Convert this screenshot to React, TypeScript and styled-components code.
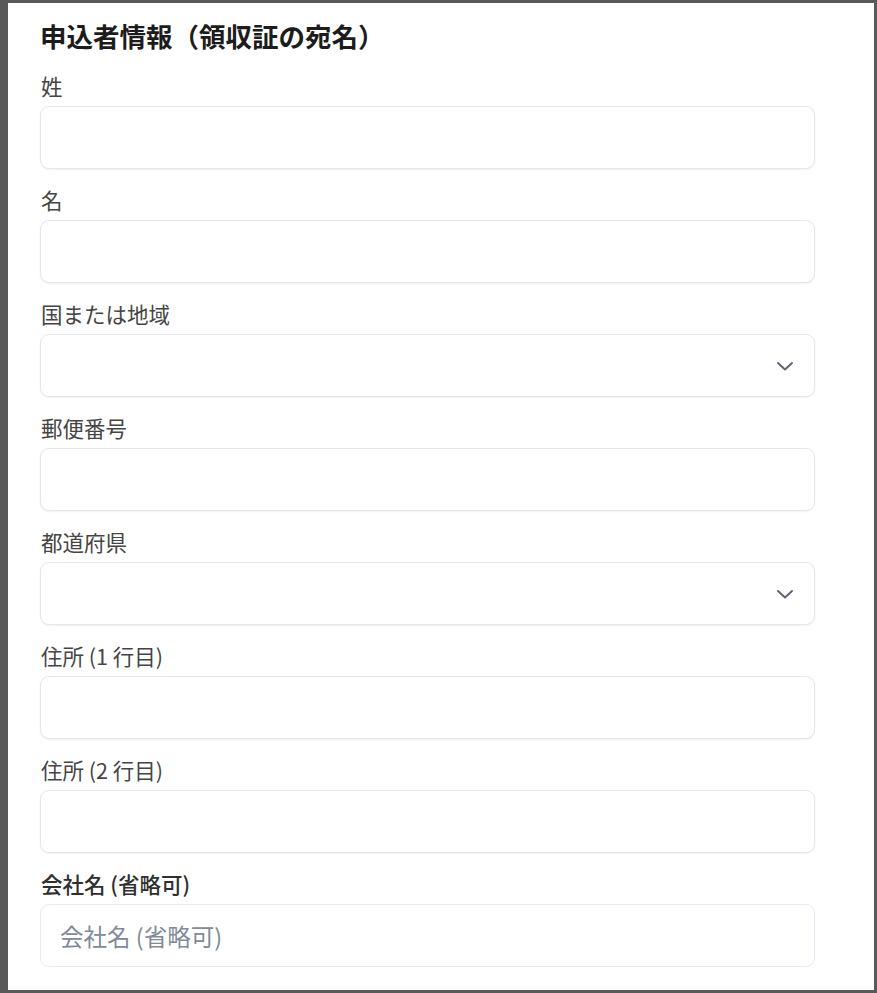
import styled, { createGlobalStyle } from "styled-components";

const GlobalStyle = createGlobalStyle`
    html, body {
        margin: 0;
        padding: 0;
        background: #ffffff;
    }

    * {
        box-sizing: border-box;
    }
`;

const Frame = styled.div`
    width: 877px;
    height: 993px;
    border-style: solid;
    border-color: #595959;
    border-width: 3px 3px 3px 8px;
    background: #ffffff;
    padding: 15px 59px 23px 32px;
    font-family: "Noto Sans CJK JP", "Noto Sans", sans-serif;
`;

const Title = styled.h2`
    margin: 0 0 17px;
    font-size: 26.5px;
    line-height: 36px;
    font-weight: 700;
    color: #1c1c1c;
`;

const FieldList = styled.div`
    display: flex;
    flex-direction: column;
    gap: 16px;
`;

const Field = styled.div`
    display: flex;
    flex-direction: column;
    gap: 5px;
`;

const Label = styled.label<{ $strong?: boolean }>`
    display: block;
    font-size: 21.5px;
    line-height: 30px;
    font-weight: ${props => (props.$strong ? 500 : 400)};
    color: ${props => (props.$strong ? "#2f2f2f" : "#454545")};
    padding-left: 1px;
`;

const InputBox = styled.div`
    height: 63px;
`;

const TextInput = styled.input<{ $soft?: boolean }>`
    width: 100%;
    height: 100%;
    border: 1px solid ${props => (props.$soft ? "#e6ebf3" : "#e6e6e8")};
    border-radius: 9px;
    background: #ffffff;
    box-shadow: ${props => (props.$soft ? "none" : "0 1px 2px rgba(0, 0, 0, 0.06)")};
    padding: 0 19px;
    font-family: inherit;
    font-size: 23.5px;
    color: #1c1c1c;
    outline: none;

    &::placeholder {
        color: #818a9a;
    }
`;

const SelectBox = styled.div`
    height: 63px;
    border: 1px solid #e6e6e8;
    border-radius: 9px;
    background: #ffffff;
    box-shadow: 0 1px 2px rgba(0, 0, 0, 0.06);
    display: flex;
    align-items: center;
    justify-content: flex-end;
    padding-right: 20px;
`;

const Chevron = () => (
    <svg width="18" height="10" viewBox="0 0 18 10" fill="none">
        <path d="M2 2l7 6.5 7-6.5" stroke="#5f6470" strokeWidth="2" strokeLinecap="round" strokeLinejoin="round" />
    </svg>
);

type FieldDef = {
    label: string;
    kind: "text" | "select";
    placeholder?: string;
    optional?: boolean;
};

const fields: FieldDef[] = [
    { label: "姓", kind: "text" },
    { label: "名", kind: "text" },
    { label: "国または地域", kind: "select" },
    { label: "郵便番号", kind: "text" },
    { label: "都道府県", kind: "select" },
    { label: "住所 (1 行目)", kind: "text" },
    { label: "住所 (2 行目)", kind: "text" },
    { label: "会社名 (省略可)", kind: "text", placeholder: "会社名 (省略可)", optional: true },
];

const App = () => {
    return (
        <>
            <GlobalStyle />
            <Frame>
                <Title>申込者情報（領収証の宛名）</Title>
                <FieldList>
                    {fields.map(field => (
                        <Field key={field.label}>
                            <Label $strong={field.optional}>{field.label}</Label>
                            {field.kind === "select" ? (
                                <SelectBox>
                                    <Chevron />
                                </SelectBox>
                            ) : (
                                <InputBox>
                                    <TextInput $soft={field.optional} placeholder={field.placeholder} />
                                </InputBox>
                            )}
                        </Field>
                    ))}
                </FieldList>
            </Frame>
        </>
    );
};

export default App;
